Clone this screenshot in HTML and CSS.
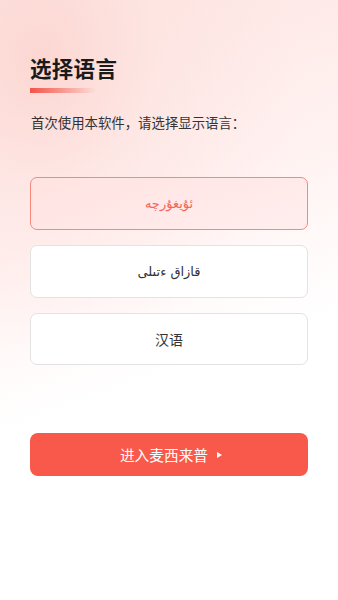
FILE: index.html
```html
<!DOCTYPE html>
<html lang="zh">
<head>
<meta charset="utf-8">
<link rel="stylesheet" href="styles.css">
</head>
<body>
<div class="page">
  <h1 class="title">选择语言</h1>
  <div class="bar"></div>
  <p class="sub">首次使用本软件，请选择显示语言：</p>
  <div class="list">
    <div class="item active" dir="rtl">ئۇيغۇرچە</div>
    <div class="item" dir="rtl">قازاق ءتىلى</div>
    <div class="item">汉语</div>
  </div>
  <button class="enter">进入麦西来普<span class="tri"></span></button>
</div>
</body>
</html>
```
FILE: styles.css
```css
html, body { margin: 0; padding: 0; }
body {
  width: 338px;
  height: 600px;
  overflow: hidden;
  background: #fff;
  font-family: "Noto Sans CJK SC", "DejaVu Sans", sans-serif;
}
.page {
  height: 600px;
  box-sizing: border-box;
  padding: 53px 30px 0 30px;
  background:
    radial-gradient(ellipse 260px 300px at 40px 60px, rgba(252,212,207,0.85) 0%, rgba(253,225,222,0.5) 45%, rgba(255,255,255,0) 100%),
    linear-gradient(160deg, #fde4e1 0%, #fff2f1 35%, #ffffff 60%);
}
.title {
  margin: 0;
  font-size: 21.5px;
  line-height: 30px;
  font-weight: 700;
  color: #1a1a1a;
  letter-spacing: 0.3px;
}
.bar {
  margin-top: 5px;
  width: 66px;
  height: 5px;
  background: linear-gradient(90deg, #f3534a 0%, rgba(246,120,110,0.6) 55%, rgba(250,190,185,0) 100%);
}
.sub {
  margin: 19px 0 0 1px;
  font-size: 13.4px;
  line-height: 20px;
  color: #333;
}
.list {
  margin-top: 45px;
  display: flex;
  flex-direction: column;
  gap: 15px;
}
.item {
  height: 53px;
  box-sizing: border-box;
  border: 1px solid #e3e3e3;
  border-radius: 7px;
  background: #fff;
  display: flex;
  align-items: center;
  justify-content: center;
  font-size: 13px;
  color: #333;
  font-family: "DejaVu Sans", "Noto Sans CJK SC", sans-serif;
}
.item:last-child {
  font-family: "Noto Sans CJK SC", sans-serif;
  font-size: 14px;
  height: 52px;
}
.item.active {
  border: 1.5px solid #f8877c;
  background: linear-gradient(160deg, #ffe3e1 0%, #ffeeee 100%);
  color: #f2665a;
}
.enter {
  margin-top: 68px;
  width: 278px;
  height: 43px;
  border: none;
  border-radius: 8px;
  background: #f9594b;
  color: #fff;
  font-family: "Noto Sans CJK SC", sans-serif;
  font-size: 14.7px;
  display: flex;
  align-items: center;
  justify-content: center;
  padding: 0 0 0 4px;
}
.tri {
  display: inline-block;
  margin-left: 9px;
  width: 0;
  height: 0;
  border-top: 3.5px solid transparent;
  border-bottom: 3.5px solid transparent;
  border-left: 5px solid #fff;
}
```
